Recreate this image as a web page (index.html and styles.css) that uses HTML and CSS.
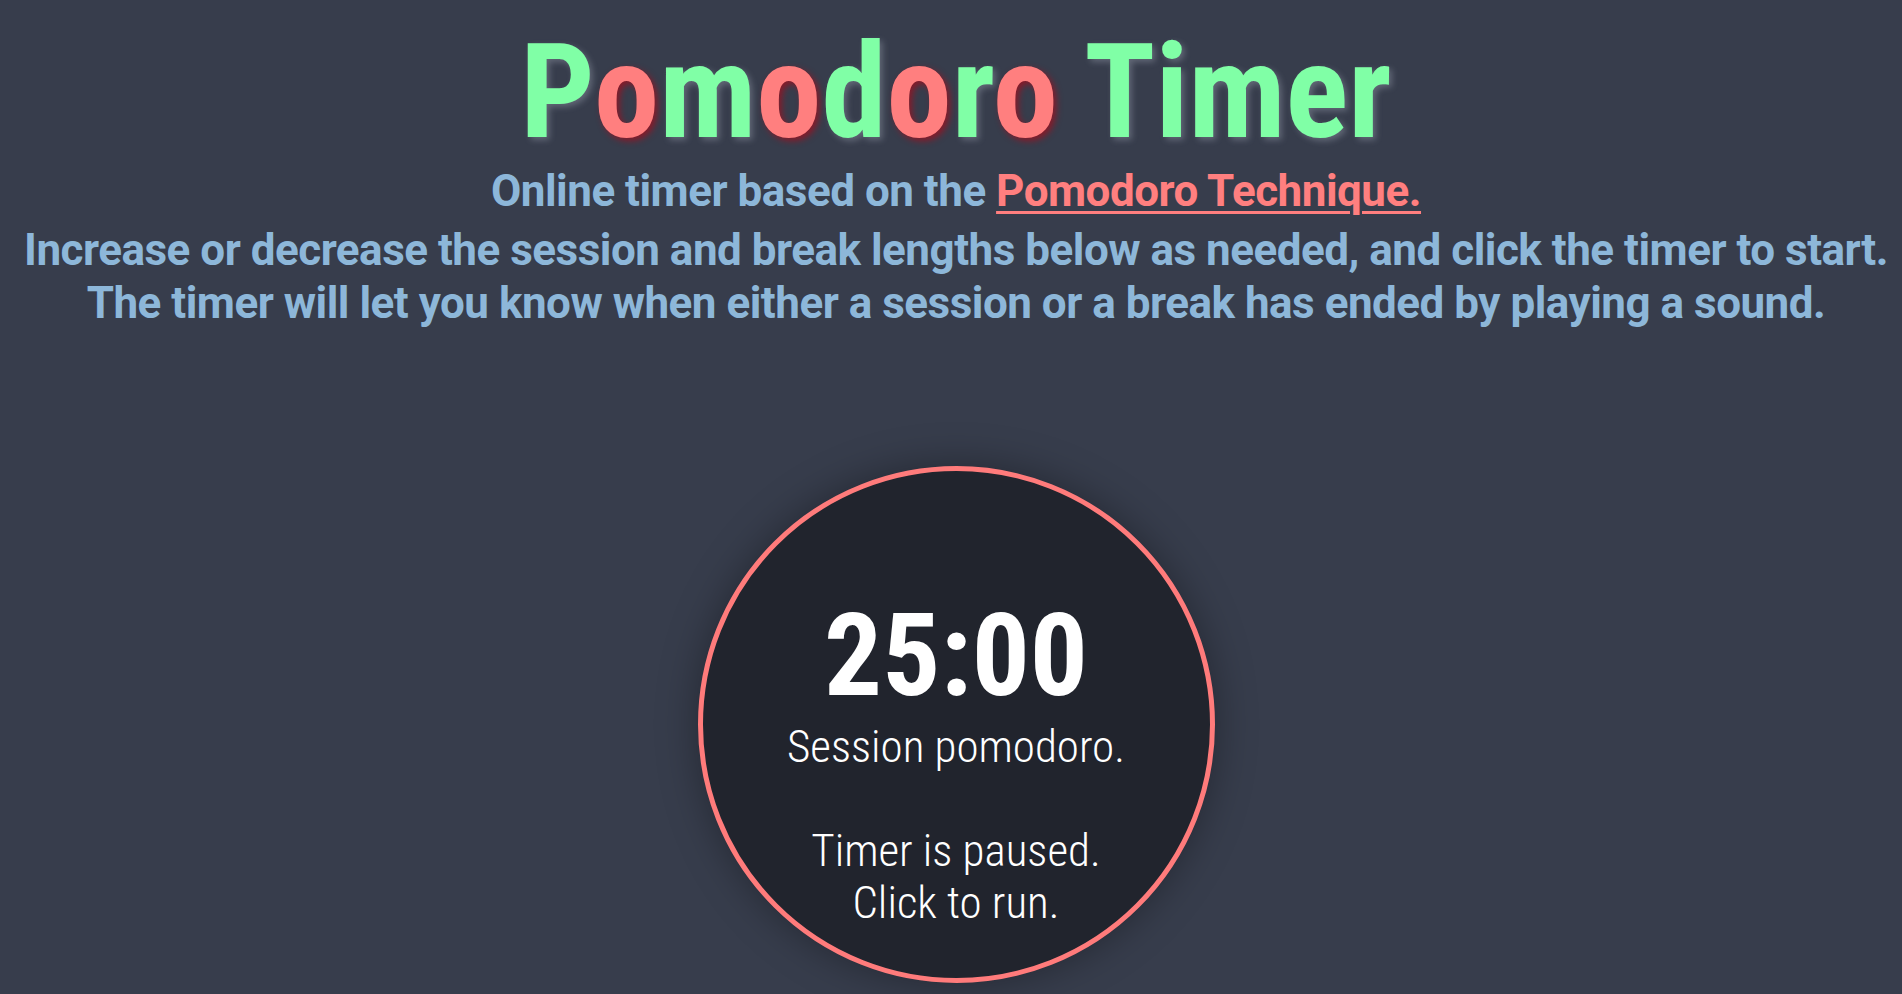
FILE: index.html
```html
<!DOCTYPE html>
<html lang="en">
<head>
<meta charset="utf-8">
<title>Pomodoro Timer</title>
<link rel="stylesheet" href="styles.css">
</head>
<body>
<main class="app">
  <header class="header">
    <h1 class="title"><span class="g">P</span><span class="r">o</span><span class="g">m</span><span class="r">o</span><span class="g">d</span><span class="r">o</span><span class="g">r</span><span class="r">o</span><span class="g"> Timer</span></h1>
    <p class="intro">Online timer based on the <a class="link" href="#">Pomodoro Technique.</a></p>
    <p class="desc">Increase or decrease the session and break lengths below as needed, and click the timer to start.<br>The timer will let you know when either a session or a break has ended by playing a sound.</p>
  </header>
  <section class="timer">
    <div class="time">25:00</div>
    <p class="status">Session pomodoro.<br><br>Timer is paused.<br>Click to run.</p>
  </section>
</main>
</body>
</html>
```
FILE: styles.css
```css
* { box-sizing: border-box; }
html, body { margin: 0; padding: 0; }
body {
  background: #373d4c;
  font-family: Roboto, "Open Sans", sans-serif;
  color: #fff;
  min-height: 100vh;
  overflow: hidden;
}
.app {
  display: flex;
  flex-direction: column;
  align-items: center;
  padding-left: 10px;
}
.header {
  display: flex;
  flex-direction: column;
  align-items: center;
  text-align: center;
}
.title {
  margin: 27px 0 0;
  font-family: "Roboto Condensed", Roboto, sans-serif;
  font-size: 131px;
  line-height: 131px;
  font-weight: 700;
  white-space: nowrap;
}
.g { color: #80ffa6; text-shadow: 3px 3px 6px rgba(210, 215, 230, 0.28); }
.r { color: #ff7f7f; text-shadow: 3px 3px 6px rgba(150, 20, 35, 0.85); }
.intro,
.desc {
  font-size: 44px;
  line-height: 53px;
  font-weight: 700;
  letter-spacing: -0.5px;
  color: #8db7d9;
  white-space: nowrap;
}
.intro { margin: 7px 0 0; }
.desc { margin: 6px 0 0; }
.link {
  color: #ff7f7f;
  text-decoration: underline;
  text-decoration-thickness: 3px;
  text-underline-offset: 5px;
}
.timer {
  margin-top: 136px;
  width: 517px;
  height: 517px;
  border: 5px solid #ff7b7b;
  border-radius: 50%;
  background: #21242d;
  box-shadow: 0 0 40px rgba(0, 0, 0, 0.35);
  display: flex;
  flex-direction: column;
  align-items: center;
  justify-content: center;
  padding-top: 77px;
  text-align: center;
  flex-shrink: 0;
}
.time {
  font-family: "Roboto Condensed", Roboto, sans-serif;
  font-size: 115px;
  line-height: 115px;
  font-weight: 700;
  color: #fff;
}
.status {
  margin: 8px 0 0;
  font-family: "Roboto Condensed", Roboto, sans-serif;
  font-size: 45px;
  line-height: 52px;
  font-weight: 300;
  color: #fff;
}
```
